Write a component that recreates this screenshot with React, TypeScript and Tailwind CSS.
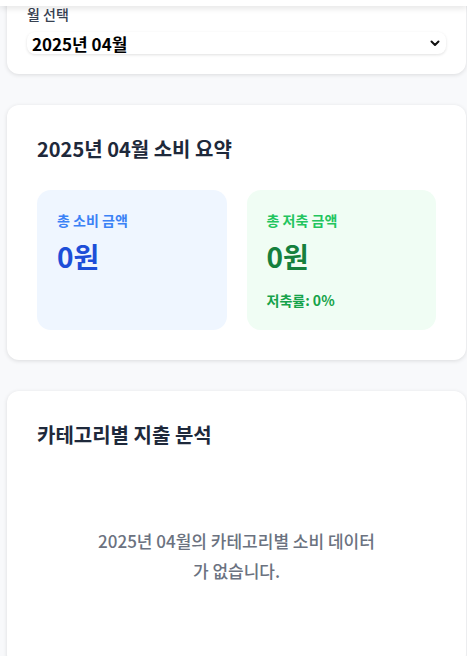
import React from "react";

export default function App() {
  const font = { fontFamily: '"Noto Sans CJK KR", "Noto Sans", sans-serif' };
  return (
    <div className="min-h-[656px] bg-[#f8f9fb] overflow-hidden" style={font}>
      <div className="fixed top-0 left-0 right-0 h-[6px] bg-white shadow-[0_2px_6px_rgba(0,0,0,0.12)] z-10" />
      <div className="flex flex-col gap-[31px] ml-[7px] mr-[1px] mt-[-16px]">
        <div className="bg-white rounded-xl shadow-[0_1px_4px_rgba(0,0,0,0.12)] p-5">
          <div className="text-sm font-medium text-[#374151] leading-5 mb-2">월 선택</div>
          <div className="flex items-center justify-between h-[22px] rounded-lg bg-white shadow-[0_1px_3px_rgba(0,0,0,0.12)] pl-[5px] pr-[5px]">
            <span className="text-[17px] font-bold text-black leading-none">2025년 04월</span>
            <svg width="12" height="12" viewBox="0 0 24 24" fill="none" stroke="#111" strokeWidth="4" strokeLinecap="round" strokeLinejoin="round">
              <path d="M5 9l7 7 7-7" />
            </svg>
          </div>
        </div>

        <div className="bg-white rounded-xl shadow-[0_1px_4px_rgba(0,0,0,0.12)] p-[30px]">
          <h2 className="text-xl font-bold text-[#1e293b] leading-7 mb-[27px]">2025년 04월 소비 요약</h2>
          <div className="grid grid-cols-2 gap-5">
            <div className="bg-[#eff6ff] rounded-[14px] p-5">
              <div className="text-sm font-bold text-[#3b82f6] leading-5">총 소비 금액</div>
              <div className="text-[28px] font-bold text-[#1d4ed8] leading-9 mt-2">0원</div>
            </div>
            <div className="bg-[#f0fdf4] rounded-[14px] p-5">
              <div className="text-sm font-bold text-[#22c55e] leading-5">총 저축 금액</div>
              <div className="text-[28px] font-bold text-[#15803d] leading-9 mt-2">0원</div>
              <div className="text-sm font-bold text-[#16a34a] leading-5 mt-[16px]">저축률: 0%</div>
            </div>
          </div>
        </div>

        <div className="bg-white rounded-xl shadow-[0_1px_4px_rgba(0,0,0,0.12)] px-[30px] pt-[30px] pb-[80px]">
          <h2 className="text-xl font-bold text-[#1e293b] leading-7">카테고리별 지출 분석</h2>
          <div className="pt-[77px] text-center text-[17px] font-medium text-[#6b7280] leading-[30px]">
            2025년 04월의 카테고리별 소비 데이터
            <br />
            가 없습니다.
          </div>
        </div>
      </div>
    </div>
  );
}
